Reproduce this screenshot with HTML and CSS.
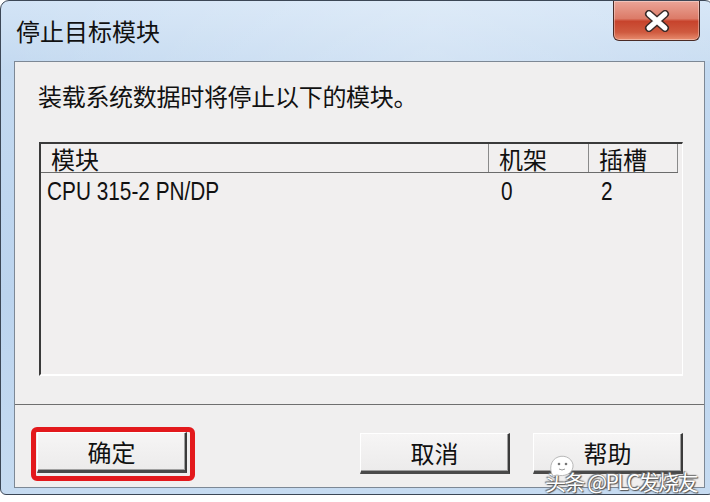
FILE: index.html
```html
<!DOCTYPE html>
<html lang="zh-CN">
<head>
    <meta charset="UTF-8">
    <title>停止目标模块</title>
    <link rel="stylesheet" href="styles.css">
</head>
<body>
    <div class="window">
        <div class="titlebar">
            <div class="title">停止目标模块</div>
            <div class="close-btn">
                <svg width="30" height="22" viewBox="0 0 30 22">
                    <path d="M7 4 L23 18 M23 4 L7 18" stroke="#3a2a28" stroke-width="8" stroke-linecap="round"/>
                    <path d="M7 4 L23 18 M23 4 L7 18" stroke="#fff" stroke-width="5" stroke-linecap="round"/>
                </svg>
            </div>
        </div>

        <div class="client">
            <div class="top-part">
                <p class="message">装载系统数据时将停止以下的模块。</p>

                <div class="listview">
                    <div class="lv-header">
                        <div class="hcell col-name">模块</div>
                        <div class="hcell col-rack">机架</div>
                        <div class="hcell col-slot">插槽</div>
                    </div>
                    <div class="lv-row">
                        <div class="cell col-name"><span class="narrow">CPU 315-2 PN/DP</span></div>
                        <div class="cell col-rack"><span class="narrow">0</span></div>
                        <div class="cell col-slot"><span class="narrow">2</span></div>
                    </div>
                </div>
            </div>

            <div class="button-row">
                <span class="highlight">
                    <button class="btn">确定</button>
                </span>
                <button class="btn btn-cancel">取消</button>
                <button class="btn">帮助</button>
            </div>
        </div>
    </div>

    <div class="watermark">
        <svg class="wm-icon" width="30" height="28" viewBox="0 0 30 28">
            <path d="M6 24 C2 18 3 8 11 5 C19 2 27 8 26 15 C25 22 17 25 10 23 Z" fill="#fff" stroke="#b8b8b8" stroke-width="1"/>
            <circle cx="12" cy="12" r="1.3" fill="#777"/>
            <circle cx="19" cy="12" r="1.3" fill="#777"/>
            <path d="M12 17 Q15 19 18 17" stroke="#999" stroke-width="1" fill="none"/>
        </svg>
        <span class="wm-text">头条 @PLC发烧友</span>
    </div>
</body>
</html>
```

FILE: styles.css
```css
body {
    margin: 0;
    background: #fff;
    width: 710px;
    height: 502px;
    overflow: hidden;
    position: relative;
    font-family: "Noto Sans CJK SC", "DejaVu Sans", sans-serif;
}
.window {
    width: 714px;
    height: 495px;
    box-sizing: border-box;
    border: 1px solid #3c4756;
    border-radius: 9px 9px 6px 6px;
    background: linear-gradient(to bottom, #d3e4f6 0%, #c3d9f0 14%, #bcd4ee 60%, #c6dbf1 100%);
    display: flex;
    flex-direction: column;
}
.titlebar {
    height: 60px;
    display: flex;
    justify-content: space-between;
    flex: none;
    background: linear-gradient(to right, rgba(255,255,255,0) 0%, rgba(255,255,255,0.25) 60%, rgba(255,255,255,0.1) 100%);
}
.title {
    padding: 14px 0 0 15px;
    font-size: 24px;
    line-height: 32px;
    color: #111;
}
.close-btn {
    width: 87px;
    height: 40px;
    margin-right: 13px;
    box-sizing: border-box;
    border: 1px solid #4a2b26;
    border-top: none;
    border-radius: 0 0 6px 6px;
    background: linear-gradient(to bottom, #eaa598 0%, #dc7b68 45%, #c7432c 52%, #cf5a3f 80%, #e88e70 100%);
    display: flex;
    align-items: center;
    justify-content: center;
    box-shadow: inset 0 0 0 1px rgba(255,255,255,0.35);
}
.client {
    flex: 1;
    margin: 0 8px 6px 13px;
    border: 1px solid #7d8895;
    background: #f0efef;
    display: flex;
    flex-direction: column;
}
.top-part {
    padding: 18px 21px 0 23px;
    height: 342px;
    box-sizing: border-box;
    flex: none;
}
.message {
    margin: 0;
    font-size: 24px;
    line-height: 32px;
    letter-spacing: -0.3px;
    color: #111;
}
.listview {
    margin: 30px 0 0 1px;
    width: 644px;
    height: 234px;
    box-sizing: border-box;
    border-top: 2px solid #3a3a3a;
    border-left: 2px solid #3a3a3a;
    border-right: 1px solid #fff;
    border-bottom: 2px solid #fff;
    background: #f1efef;
}
.lv-header {
    display: flex;
    height: 28px;
    width: 637px;
    border-bottom: 1px solid #6b6b6b;
}
.hcell {
    box-sizing: border-box;
    height: 28px;
    font-size: 24px;
    line-height: 27px;
    padding-top: 1px;
    padding-left: 10px;
    border-right: 1px solid #8a8a8a;
    color: #111;
    white-space: nowrap;
}
.col-name {
    width: 448px;
}
.col-rack {
    width: 100px;
}
.col-slot {
    width: 89px;
}
.lv-row {
    display: flex;
    height: 30px;
    padding-top: 3px;
    align-items: center;
}
.cell {
    box-sizing: border-box;
    padding-left: 12px;
    font-family: "Liberation Sans", "Arial", sans-serif;
    font-size: 26px;
    line-height: 26px;
    color: #111;
    white-space: nowrap;
}
.cell.col-name {
    padding-left: 6px;
}
.narrow {
    display: inline-block;
    transform: scaleX(0.8);
    transform-origin: left center;
}
.button-row {
    flex: 1;
    border-top: 1px solid #6f6f6f;
    display: flex;
    align-items: flex-start;
    padding: 22px 21px 0 16px;
}
.highlight {
    display: inline-flex;
    border: 5px solid #e3191c;
    border-radius: 6px;
    padding: 0 3px 3px 1px;
}
.btn {
    width: 150px;
    height: 41px;
    box-sizing: border-box;
    background: linear-gradient(to bottom, #f6f5f5, #ecebeb);
    border-top: 1px solid #fff;
    border-left: 1px solid #fff;
    border-right: 2px solid #3b3b3b;
    border-bottom: 3px solid #4a4a4a;
    font-family: "Noto Sans CJK SC", sans-serif;
    font-size: 24px;
    line-height: 30px;
    color: #111;
    padding: 0;
    box-shadow: inset -1px -1px 0 #a0a0a0;
}
.btn-cancel {
    margin-left: auto;
    margin-right: 23px;
    margin-top: 6px;
}
.btn-cancel + .btn {
    margin-top: 6px;
}
.watermark {
    position: absolute;
    left: 545px;
    top: 452px;
    display: flex;
    align-items: flex-end;
}
.wm-icon {
    position: absolute;
    left: 2px;
    top: 0;
}
.wm-text {
    margin-top: 14px;
    font-size: 21px;
    line-height: 30px;
    letter-spacing: -1.5px;
    color: #fff;
    text-shadow: 0 0 2px #555, 1px 1px 1px #555, -1px -1px 1px #777;
    white-space: nowrap;
}
```
